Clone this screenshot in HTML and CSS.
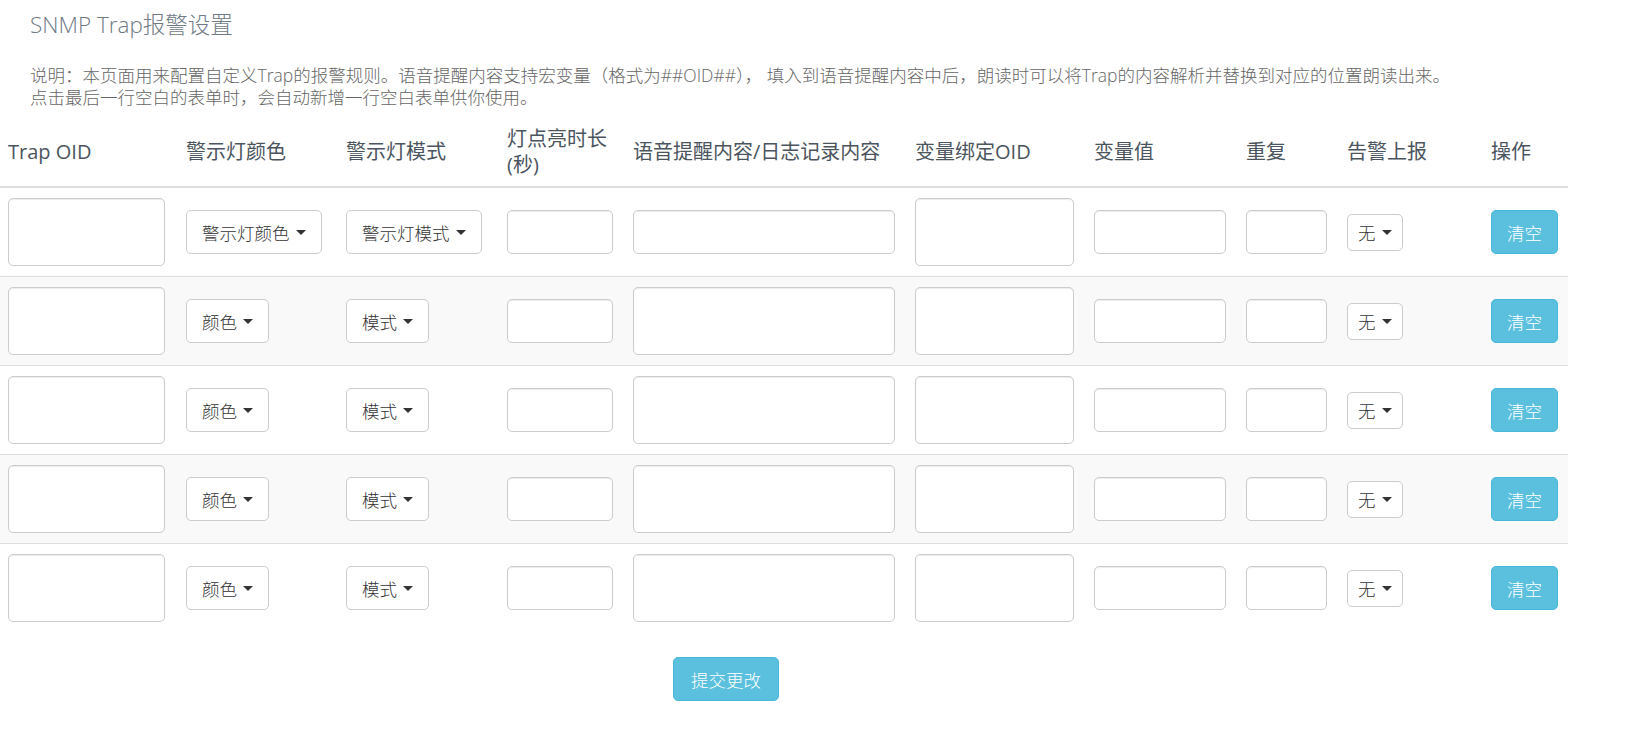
FILE: index.html
```html
<!DOCTYPE html>
<html lang="zh-CN">
<head>
    <meta charset="UTF-8">
    <title>SNMP Trap报警设置</title>
    <link rel="stylesheet" href="styles.css">
</head>
<body>
    <h3 class="page-title">SNMP Trap报警设置</h3>
    <p class="desc">说明：本页面用来配置自定义Trap的报警规则。语音提醒内容支持宏变量（格式为##OID##）， 填入到语音提醒内容中后，朗读时可以将Trap的内容解析并替换到对应的位置朗读出来。<br>点击最后一行空白的表单时，会自动新增一行空白表单供你使用。</p>

    <table class="trap-table">
        <colgroup>
            <col style="width:178px">
            <col style="width:160px">
            <col style="width:161px">
            <col style="width:126px">
            <col style="width:282px">
            <col style="width:179px">
            <col style="width:152px">
            <col style="width:101px">
            <col style="width:144px">
            <col style="width:85px">
        </colgroup>
        <thead>
            <tr>
                <th>Trap OID</th>
                <th>警示灯颜色</th>
                <th>警示灯模式</th>
                <th>灯点亮时长<br>(秒)</th>
                <th>语音提醒内容/日志记录内容</th>
                <th>变量绑定OID</th>
                <th>变量值</th>
                <th>重复</th>
                <th>告警上报</th>
                <th>操作</th>
            </tr>
        </thead>
        <tbody>
            <tr>
                <td><textarea class="box oid"></textarea></td>
                <td><button class="btn">警示灯颜色<span class="caret"></span></button></td>
                <td><button class="btn">警示灯模式<span class="caret"></span></button></td>
                <td><input class="box time"></td>
                <td><input class="box voice"></td>
                <td><textarea class="box bind"></textarea></td>
                <td><input class="box value"></td>
                <td><input class="box repeat"></td>
                <td><button class="btn btn-sm">无<span class="caret"></span></button></td>
                <td><button class="btn btn-info">清空</button></td>
            </tr>
            <tr>
                <td><textarea class="box oid"></textarea></td>
                <td><button class="btn">颜色<span class="caret"></span></button></td>
                <td><button class="btn">模式<span class="caret"></span></button></td>
                <td><input class="box time"></td>
                <td><textarea class="box voice"></textarea></td>
                <td><textarea class="box bind"></textarea></td>
                <td><input class="box value"></td>
                <td><input class="box repeat"></td>
                <td><button class="btn btn-sm">无<span class="caret"></span></button></td>
                <td><button class="btn btn-info">清空</button></td>
            </tr>
            <tr>
                <td><textarea class="box oid"></textarea></td>
                <td><button class="btn">颜色<span class="caret"></span></button></td>
                <td><button class="btn">模式<span class="caret"></span></button></td>
                <td><input class="box time"></td>
                <td><textarea class="box voice"></textarea></td>
                <td><textarea class="box bind"></textarea></td>
                <td><input class="box value"></td>
                <td><input class="box repeat"></td>
                <td><button class="btn btn-sm">无<span class="caret"></span></button></td>
                <td><button class="btn btn-info">清空</button></td>
            </tr>
            <tr>
                <td><textarea class="box oid"></textarea></td>
                <td><button class="btn">颜色<span class="caret"></span></button></td>
                <td><button class="btn">模式<span class="caret"></span></button></td>
                <td><input class="box time"></td>
                <td><textarea class="box voice"></textarea></td>
                <td><textarea class="box bind"></textarea></td>
                <td><input class="box value"></td>
                <td><input class="box repeat"></td>
                <td><button class="btn btn-sm">无<span class="caret"></span></button></td>
                <td><button class="btn btn-info">清空</button></td>
            </tr>
            <tr>
                <td><textarea class="box oid"></textarea></td>
                <td><button class="btn">颜色<span class="caret"></span></button></td>
                <td><button class="btn">模式<span class="caret"></span></button></td>
                <td><input class="box time"></td>
                <td><textarea class="box voice"></textarea></td>
                <td><textarea class="box bind"></textarea></td>
                <td><input class="box value"></td>
                <td><input class="box repeat"></td>
                <td><button class="btn btn-sm">无<span class="caret"></span></button></td>
                <td><button class="btn btn-info">清空</button></td>
            </tr>
        </tbody>
    </table>

    <div class="actions">
        <button class="btn btn-info submit">提交更改</button>
    </div>
</body>
</html>
```

FILE: styles.css
```css
body {
    margin: 0;
    font-family: "Open Sans", "Noto Sans CJK SC", sans-serif;
    font-size: 17.5px;
    color: #333;
    background-color: #fff;
}

.page-title {
    margin: 12px 0 0 30px;
    font-size: 22.5px;
    font-weight: 300;
    line-height: 26px;
    color: #6f7a85;
}

.desc {
    margin: 26px 0 0 30px;
    font-size: 17.5px;
    font-weight: 300;
    line-height: 22px;
    color: #666;
    white-space: nowrap;
}

.trap-table {
    width: 1568px;
    margin-top: 10px;
    border-collapse: collapse;
    table-layout: fixed;
}

.trap-table th {
    padding: 8px;
    font-size: 20px;
    font-weight: normal;
    line-height: 26px;
    text-align: left;
    vertical-align: middle;
    color: #4b5560;
    border-bottom: 2px solid #ddd;
    height: 51px;
}

.trap-table td {
    padding: 10px 8px;
    height: 68px;
    vertical-align: middle;
    border-top: 1px solid #ddd;
}

.trap-table tbody tr:nth-child(even) {
    background-color: #f9f9f9;
}

.box {
    display: block;
    box-sizing: border-box;
    height: 44px;
    margin: 0;
    padding: 6px 10px;
    font-family: inherit;
    font-size: 17.5px;
    color: #555;
    background-color: #fff;
    border: 1px solid #ccc;
    border-radius: 5px;
    box-shadow: inset 0 1px 1px rgba(0, 0, 0, .075);
    resize: none;
}

textarea.box {
    height: 68px;
}

.oid { width: 157px; }
.time { width: 106px; }
.voice { width: 262px; }
.bind { width: 159px; }
.value { width: 132px; }
.repeat { width: 81px; }

.btn {
    display: inline-flex;
    align-items: center;
    box-sizing: border-box;
    height: 44px;
    padding: 0 15px;
    font-family: inherit;
    font-size: 17.5px;
    font-weight: 300;
    color: #333;
    background-color: #fff;
    border: 1px solid #ccc;
    border-radius: 5px;
    cursor: pointer;
}

.btn-sm {
    height: 37px;
    padding: 0 10px;
}

.btn-info {
    color: #fff;
    background-color: #5bc0de;
    border-color: #46b8da;
}

.caret {
    display: inline-block;
    width: 0;
    height: 0;
    margin-left: 6px;
    border-top: 5px solid #333;
    border-left: 5px solid transparent;
    border-right: 5px solid transparent;
}

.actions {
    padding: 25px 0 0 673px;
}

.submit {
    padding: 0 17px;
}
```
